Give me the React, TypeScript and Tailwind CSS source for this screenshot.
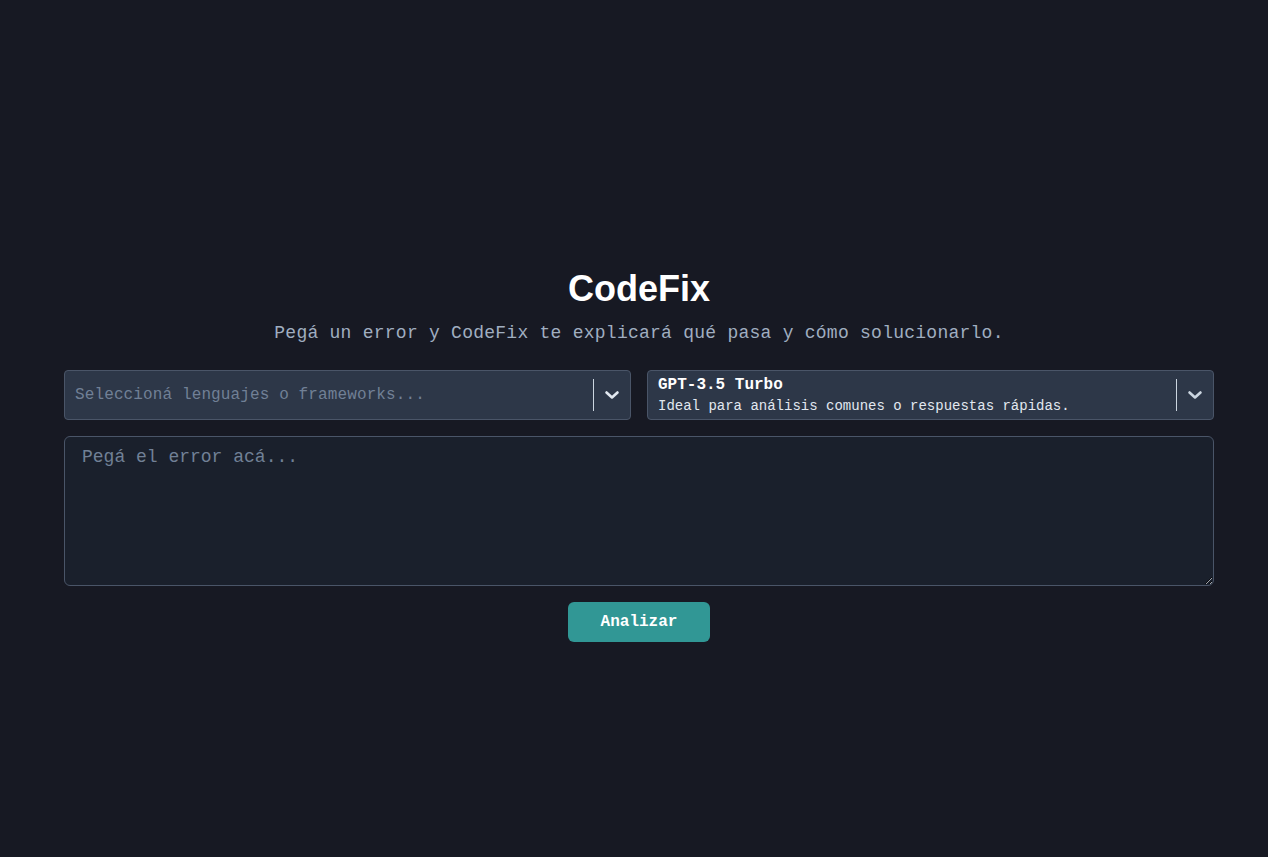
import React from "react";

const mono = { fontFamily: '"Liberation Mono", "DejaVu Sans Mono", monospace' };

function Chevron({ className }: { className?: string }) {
  return (
    <svg width="16" height="16" viewBox="0 0 16 16" className={className}>
      <path
        d="M2.5 5.5 L8 10.5 L13.5 5.5"
        fill="none"
        stroke="currentColor"
        strokeWidth="2.6"
        strokeLinecap="round"
        strokeLinejoin="round"
      />
    </svg>
  );
}

export default function App() {
  return (
    <div className="min-h-[857px] w-full bg-[#171923] flex flex-col items-center pl-[64px] pr-[54px]" style={mono}>
      <div className="w-full flex flex-col items-center pt-[268px]">
        <h1 className="text-[36px] leading-[42px] font-bold text-white" style={{ fontFamily: '"Liberation Sans", Arial, sans-serif' }}>
          CodeFix
        </h1>
        <p className="mt-[11px] text-[18px] leading-[24px] tracking-[0.25px] text-[#a0aec0]">
          Pegá un error y CodeFix te explicará qué pasa y cómo solucionarlo.
        </p>

        <div className="mt-[25px] w-full grid grid-cols-2 gap-[16px]">
          <div className="h-[50px] flex items-center bg-[#2d3748] border border-[#4a5568] rounded-[4px]">
            <div className="flex-1 pl-[10px] text-[16px] tracking-[0.12px] text-[#718096] truncate">Seleccioná lenguajes o frameworks...</div>
            <div className="w-px h-[32px] bg-[#cbd5e0]" />
            <div className="w-[36px] flex justify-center text-[#e2e8f0]">
              <Chevron />
            </div>
          </div>
          <div className="h-[50px] flex items-center bg-[#2d3748] border border-[#4a5568] rounded-[4px]">
            <div className="flex-1 pl-[10px] flex flex-col">
              <span className="text-[16px] leading-[20px] font-bold text-white">GPT-3.5 Turbo</span>
              <span className="mt-[1px] text-[14px] leading-[20px] text-[#e2e8f0]">Ideal para análisis comunes o respuestas rápidas.</span>
            </div>
            <div className="w-px h-[32px] bg-[#cbd5e0]" />
            <div className="w-[36px] flex justify-center text-[#cbd5e0]">
              <Chevron />
            </div>
          </div>
        </div>

        <textarea
          className="mt-[16px] w-full h-[150px] bg-[#1a202c] border border-[#4a5568] rounded-[6px] px-[17px] py-[8px] text-[18px] leading-[24px] text-white placeholder:text-[#718096] outline-none resize-y"
          style={mono}
          placeholder="Pegá el error acá..."
        />

        <button
          className="mt-[16px] w-[142px] h-[40px] bg-[#319795] rounded-[6px] text-white text-[16px] font-bold"
          style={mono}
        >
          Analizar
        </button>
      </div>
    </div>
  );
}
